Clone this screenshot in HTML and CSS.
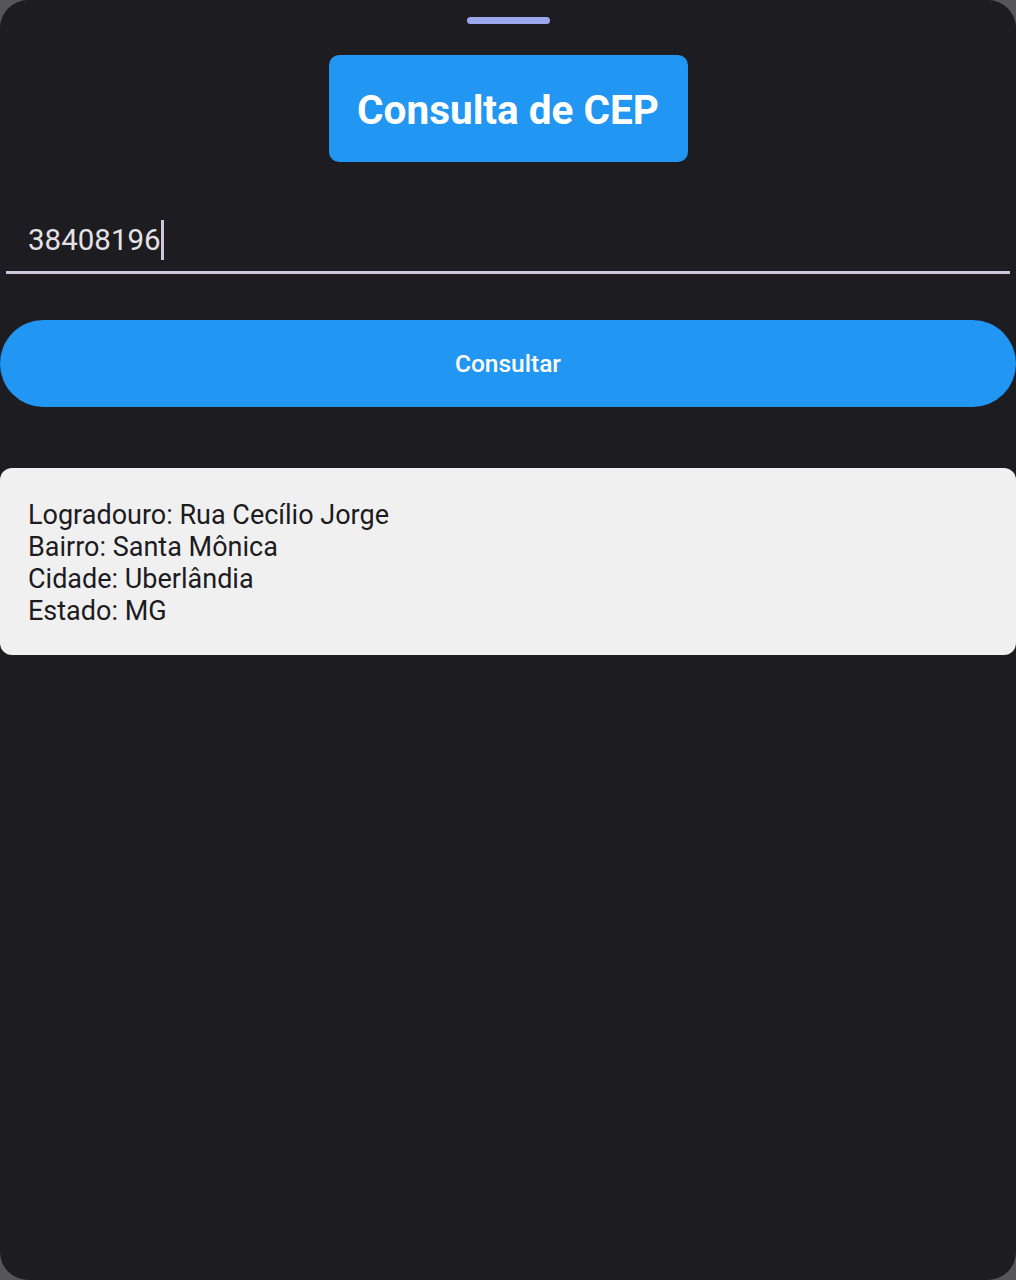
FILE: index.html
```html
<!DOCTYPE html>
<html lang="pt-BR">
<head>
<meta charset="utf-8">
<title>Consulta de CEP</title>
<link rel="stylesheet" href="styles.css">
</head>
<body>
<div class="sheet">
  <div class="handle"></div>
  <div class="title-box"><h1 class="title">Consulta de CEP</h1></div>
  <div class="field">
    <span class="field-value">38408196</span><span class="caret"></span>
  </div>
  <button class="btn">Consultar</button>
  <div class="card">
    <p class="line">Logradouro: Rua Cecílio Jorge</p>
    <p class="line">Bairro: Santa Mônica</p>
    <p class="line">Cidade: Uberlândia</p>
    <p class="line">Estado: MG</p>
  </div>
</div>
</body>
</html>
```

FILE: styles.css
```css
html, body {
  margin: 0;
  padding: 0;
  height: 100%;
}
body {
  background: #55555a;
  font-family: Roboto, "Liberation Sans", sans-serif;
}
.sheet {
  box-sizing: border-box;
  height: 1280px;
  background: #1d1c21;
  border-radius: 28px;
  display: flex;
  flex-direction: column;
  align-items: center;
  padding-top: 17px;
}
.handle {
  width: 83px;
  height: 7px;
  border-radius: 4px;
  background: #9ba6ee;
}
.title-box {
  margin-top: 31px;
  width: 359px;
  height: 107px;
  background: #2196f3;
  border-radius: 10px;
  display: flex;
  align-items: center;
  justify-content: center;
  padding-top: 3px;
  box-sizing: border-box;
}
.title {
  margin: 0;
  color: #ffffff;
  font-size: 40.5px;
  font-weight: 700;
  line-height: 48px;
}
.field {
  align-self: stretch;
  margin: 54px 6px 0 6px;
  height: 55px;
  box-sizing: content-box;
  border-bottom: 3px solid #cdc5dc;
  display: flex;
  align-items: center;
  padding-left: 22px;
  padding-bottom: 0;
}
.field-value {
  color: #e6e1e5;
  font-size: 29.5px;
  line-height: 40px;
  margin-bottom: 8px;
}
.caret {
  width: 3px;
  height: 40px;
  background: #cdc5dc;
  margin-bottom: 8px;
}
.btn {
  align-self: stretch;
  margin-top: 46px;
  height: 87px;
  border: none;
  border-radius: 44px;
  background: #2196f3;
  color: #ffffff;
  font-family: Roboto, "Liberation Sans", sans-serif;
  font-size: 24.5px;
  font-weight: 500;
  padding: 0;
}
.card {
  align-self: stretch;
  margin-top: 61px;
  height: 187px;
  box-sizing: border-box;
  background: #f0f0f0;
  border-radius: 12px;
  padding: 31px 28px;
}
.line {
  margin: 0;
  color: #1c1b1f;
  font-size: 27px;
  line-height: 32px;
}
```
